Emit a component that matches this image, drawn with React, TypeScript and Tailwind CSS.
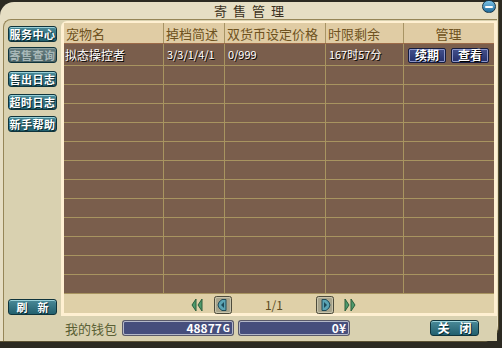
import React from "react";

const F = { fontFamily: '"Noto Sans CJK SC", "Liberation Sans", sans-serif' };

function SideBtn({ label, active = false, spaced = false }: { label: string; active?: boolean; spaced?: boolean }) {
  return (
    <div
      className={
        "w-[49px] h-[16px] rounded-[3px] border border-[#10343c] flex items-center justify-center text-[11px] leading-none font-bold whitespace-nowrap tracking-[0.5px] " +
        (active
          ? "bg-gradient-to-b from-[#667e80] to-[#4a6264] text-[#a8b8b8] shadow-[inset_0_1px_0_#8aa0a0]"
          : "bg-gradient-to-b from-[#4a8a98] to-[#22606e] text-white shadow-[inset_0_1px_0_#9ad0d8] [text-shadow:1px_1px_0_#0a2a30]") +
        (spaced ? " !tracking-[10px] pl-[10px]" : "")
      }
    >
      {label}
    </div>
  );
}

function NavyBtn({ label }: { label: string }) {
  return (
    <div className="w-[38px] h-[15px] rounded-[2px] border border-[#141c40] bg-gradient-to-b from-[#44508c] to-[#26306a] shadow-[inset_0_0_0_1px_#8c96c8] flex items-center justify-center text-white text-[12px] font-bold leading-none whitespace-nowrap [text-shadow:1px_1px_0_#000]">
      {label}
    </div>
  );
}

function DoubleArrow({ dir }: { dir: "left" | "right" }) {
  return (
    <svg width="12" height="14" viewBox="0 0 12 14" style={{ transform: dir === "right" ? "scaleX(-1)" : undefined }}>
      <path d="M5 1 L1 7 L5 13 Z" fill="#4e9a6c" stroke="#2c5e3c" strokeWidth="1" />
      <path d="M11 1 L7 7 L11 13 Z" fill="#4e9a6c" stroke="#2c5e3c" strokeWidth="1" />
    </svg>
  );
}

function PageBtn({ dir }: { dir: "left" | "right" }) {
  return (
    <svg width="18" height="18" viewBox="0 0 18 18" style={{ transform: dir === "right" ? "scaleX(-1)" : undefined }}>
      <rect x="0.5" y="0.5" width="17" height="17" rx="2" fill="#a8a48c" stroke="#4e4c3c" />
      <rect x="1.5" y="1.5" width="15" height="15" rx="1.5" fill="none" stroke="#c8c4ac" />
      <path d="M12 3.5 L12 14.5 L8 14.5 Q4 12 4 9 Q4 6 8 3.5 Z" fill="#5aa4b4" stroke="#1e4a58" strokeWidth="1" />
      <path d="M10 6 L7 9 L10 12 Z" fill="#1e4a58" />
    </svg>
  );
}

const cols = [100, 61, 101, 78, 89];

export default function App() {
  const rows = Array.from({ length: 13 });
  return (
    <div className="w-[502px] h-[348px] bg-[#2c2a22] overflow-hidden pt-[2px]" style={F}>
      <div className="w-[499px] h-[340px] bg-[#e6dec4] rounded-tl-[14px] rounded-br-[16px] border-r border-b border-[#5c5232] flex flex-col">
        {/* title */}
        <div className="h-[17px] relative flex items-center justify-center">
          <span className="text-[13px] leading-none text-[#3a3020] tracking-[6px] pl-[6px] whitespace-nowrap">寄售管理</span>
          <div className="absolute right-[2px] top-[-2px] w-[14px] h-[13px] rounded-full border border-[#16364a] bg-gradient-to-b from-[#7cc4e8] to-[#1e6c9c] flex items-center justify-center">
            <div className="w-[8px] h-[2px] bg-white rounded-[1px]" />
          </div>
        </div>
        {/* inner */}
        <div className="flex-1 ml-[3px] mr-[1px] bg-[#d9d1b0] rounded-tl-[8px] border-l border-t border-[#968658] flex flex-col">
          <div className="flex">
            {/* sidebar */}
            <div className="w-[57px] pl-[4px] pt-[6px] flex flex-col h-[296px]">
              <SideBtn label="服务中心" />
              <div className="mt-[5px]"><SideBtn label="寄售查询" active /></div>
              <div className="mt-[8px]"><SideBtn label="售出日志" /></div>
              <div className="mt-[7px]"><SideBtn label="超时日志" /></div>
              <div className="mt-[6px]"><SideBtn label="新手帮助" /></div>
              <div className="mt-auto mb-[1px]"><SideBtn label="刷新" spaced /></div>
            </div>
            {/* table box */}
            <div className="mt-[1px] w-[437px] border-[3px] border-t-[2px] border-[#fff0d2] rounded-tl-[6px] bg-[#dfd0a8] flex flex-col">
              {/* header */}
              <div className="flex h-[21px] bg-[#e0cca4] border-b border-[#9c6a48]">
                {["宠物名", "掉档简述", "双货币设定价格", "时限剩余", "管理"].map((h, i) => (
                  <div
                    key={h}
                    style={{ width: cols[i] }}
                    className={
                      "h-full flex items-center text-[13px] leading-none text-[#6e5220] whitespace-nowrap " +
                      (i < 4 ? "border-r border-[#a89464] pl-[2px]" : "justify-center")
                    }
                  >
                    {h}
                  </div>
                ))}
              </div>
              {/* rows */}
              {rows.map((_, r) => (
                <div
                  key={r}
                  className={"flex bg-[#7a5e4c] border-b border-[#a89460] " + (r === 0 ? "h-[22px]" : "h-[19px]")}
                >
                  {cols.map((w, i) => (
                    <div
                      key={i}
                      style={{ width: w }}
                      className={
                        "h-full flex items-center text-white leading-none whitespace-nowrap [text-shadow:1px_1px_0_#000] " +
                        (i < 4 ? "border-r border-[#a89460] " : "") +
                        (i === 0 ? "pl-[1px] text-[12px]" : "pl-[3px] text-[11px]")
                      }
                    >
                      {r === 0 && i === 0 && "拟态操控者"}
                      {r === 0 && i === 1 && "3/3/1/4/1"}
                      {r === 0 && i === 2 && "0/999"}
                      {r === 0 && i === 3 && "167时57分"}
                      {r === 0 && i === 4 && (
                        <div className="flex gap-[5px] pl-[1px] pt-[1px]">
                          <NavyBtn label="续期" />
                          <NavyBtn label="查看" />
                        </div>
                      )}
                    </div>
                  ))}
                </div>
              ))}
              {/* pagination */}
              <div className="h-[19px] flex items-center">
                <div className="ml-[127px] mt-[3px]"><DoubleArrow dir="left" /></div>
                <div className="ml-[11px] mt-[2px]"><PageBtn dir="left" /></div>
                <div className="w-[84px] text-center text-[12px] leading-none text-[#5a4a22] mt-[3px]">1/1</div>
                <div className="mt-[2px]"><PageBtn dir="right" /></div>
                <div className="ml-[10px] mt-[3px]"><DoubleArrow dir="right" /></div>
              </div>
            </div>
          </div>
          {/* footer */}
          <div className="flex-1 flex items-center pb-[1px]">
            <span className="ml-[61px] text-[13px] leading-none text-[#5a6034] whitespace-nowrap">我的钱包</span>
            <div className="ml-[6px] w-[110px] h-[14px] rounded-[2px] border border-[#b4b8c8] bg-[#464e7c] shadow-[0_0_0_1px_#5a5a6a] flex items-center justify-end pr-[2px] text-white text-[12px] font-bold leading-none">
              48877<span className="text-[10px] ml-[1px]">G</span>
            </div>
            <div className="ml-[6px] w-[110px] h-[14px] rounded-[2px] border border-[#b4b8c8] bg-[#464e7c] shadow-[0_0_0_1px_#5a5a6a] flex items-center justify-end pr-[2px] text-white text-[12px] font-bold leading-none">
              0¥
            </div>
            <div className="ml-[81px]">
              <div className="w-[49px] h-[16px] rounded-[3px] border border-[#10343c] bg-gradient-to-b from-[#4a8a98] to-[#22606e] shadow-[inset_0_1px_0_#9ad0d8] flex items-center justify-center text-white text-[12px] font-bold leading-none whitespace-nowrap tracking-[10px] pl-[10px] [text-shadow:1px_1px_0_#0a2a30]">
                关闭
              </div>
            </div>
          </div>
        </div>
      </div>
    </div>
  );
}
